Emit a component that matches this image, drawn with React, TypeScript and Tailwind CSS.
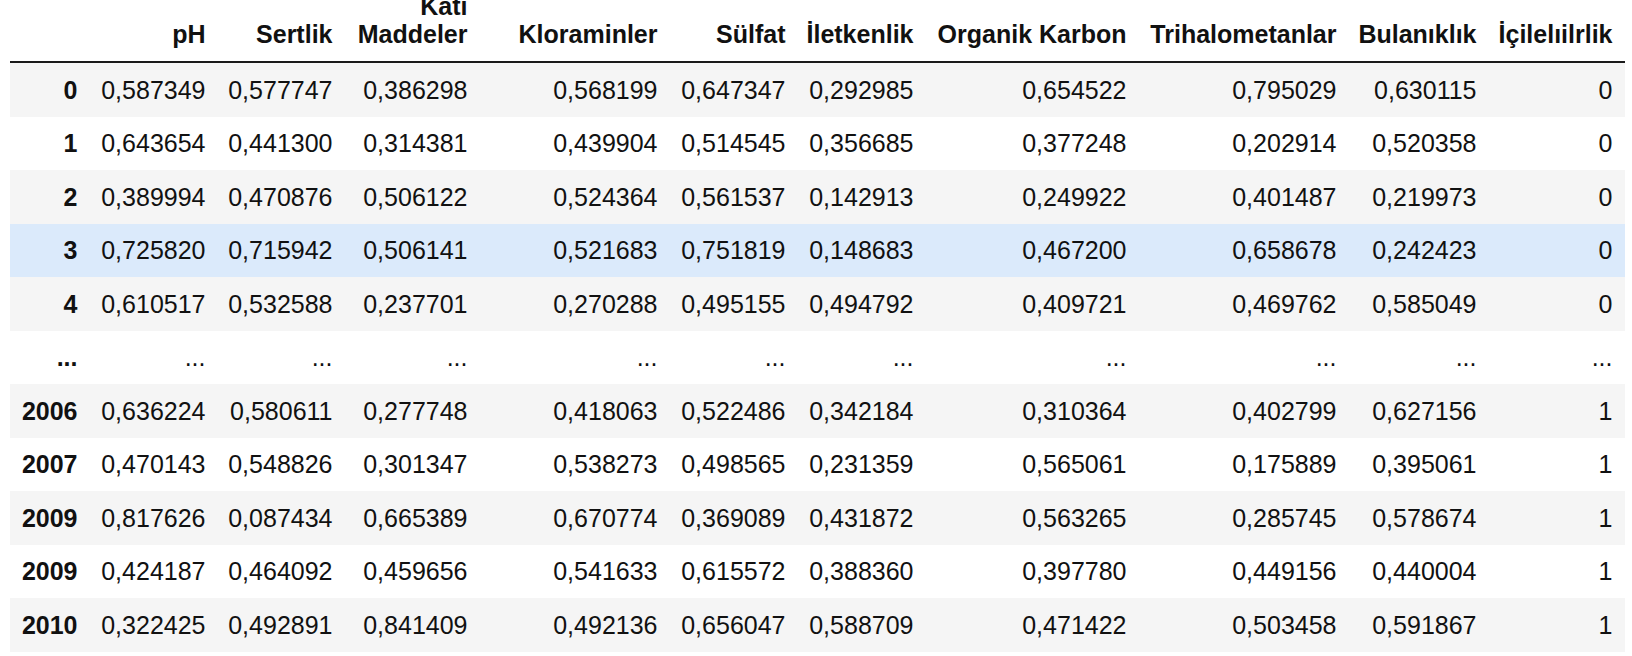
const columns = [
  { key: "ph", label: "pH", width: "w-[128px]" },
  { key: "sertlik", label: "Sertlik", width: "w-[127px]" },
  { key: "kati", label: "Katı Maddeler", width: "w-[135px]" },
  { key: "klor", label: "Kloraminler", width: "w-[190px]" },
  { key: "sulfat", label: "Sülfat", width: "w-[128px]" },
  { key: "iletken", label: "İletkenlik", width: "w-[128px]" },
  { key: "karbon", label: "Organik Karbon", width: "w-[213px]" },
  { key: "trihalo", label: "Trihalometanlar", width: "w-[210px]" },
  { key: "bulanik", label: "Bulanıklık", width: "w-[140px]" },
  { key: "icilebilir", label: "İçilelıilrlik", width: "w-[136px]" },
];

type Row = { index: string; values: string[]; hover?: boolean; ellipsis?: boolean };

const rows: Row[] = [
  { index: "0", values: ["0,587349", "0,577747", "0,386298", "0,568199", "0,647347", "0,292985", "0,654522", "0,795029", "0,630115", "0"] },
  { index: "1", values: ["0,643654", "0,441300", "0,314381", "0,439904", "0,514545", "0,356685", "0,377248", "0,202914", "0,520358", "0"] },
  { index: "2", values: ["0,389994", "0,470876", "0,506122", "0,524364", "0,561537", "0,142913", "0,249922", "0,401487", "0,219973", "0"] },
  { index: "3", values: ["0,725820", "0,715942", "0,506141", "0,521683", "0,751819", "0,148683", "0,467200", "0,658678", "0,242423", "0"], hover: true },
  { index: "4", values: ["0,610517", "0,532588", "0,237701", "0,270288", "0,495155", "0,494792", "0,409721", "0,469762", "0,585049", "0"] },
  { index: "...", values: Array(10).fill("..."), ellipsis: true },
  { index: "2006", values: ["0,636224", "0,580611", "0,277748", "0,418063", "0,522486", "0,342184", "0,310364", "0,402799", "0,627156", "1"] },
  { index: "2007", values: ["0,470143", "0,548826", "0,301347", "0,538273", "0,498565", "0,231359", "0,565061", "0,175889", "0,395061", "1"] },
  { index: "2009", values: ["0,817626", "0,087434", "0,665389", "0,670774", "0,369089", "0,431872", "0,563265", "0,285745", "0,578674", "1"] },
  { index: "2009", values: ["0,424187", "0,464092", "0,459656", "0,541633", "0,615572", "0,388360", "0,397780", "0,449156", "0,440004", "1"] },
  { index: "2010", values: ["0,322425", "0,492891", "0,841409", "0,492136", "0,656047", "0,588709", "0,471422", "0,503458", "0,591867", "1"] },
];

const cell = "pr-[12.5px] pl-0 py-[12.5px] text-right whitespace-nowrap";

export default function App() {
  return (
    <div className="h-[656px] w-[1632px] overflow-hidden bg-white font-['Liberation_Sans',Arial,sans-serif] text-[25px] leading-[28.5px] text-[#111]">
      <table className="ml-[10px] -mt-[21px] w-[1615px] table-fixed border-collapse">
        <colgroup>
          <col className="w-[80px]" />
          {columns.map((c) => (
            <col key={c.key} className={c.width} />
          ))}
        </colgroup>
        <thead className="border-b-2 border-[#1a1a1a] align-bottom">
          <tr>
            <th className={cell}></th>
            {columns.map((c) => (
              <th key={c.key} className={`${cell} font-bold`}>
                {c.key === "kati" ? (
                  <>
                    Katı
                    <br />
                    Maddeler
                  </>
                ) : (
                  c.label
                )}
              </th>
            ))}
          </tr>
        </thead>
        <tbody>
          {rows.map((r, i) => (
            <tr
              key={i}
              className={r.hover ? "bg-[#dbeafb]" : i % 2 === 0 ? "bg-[#f5f5f5]" : "bg-white"}
            >
              <th className={`${cell} font-bold`}>{r.index}</th>
              {r.values.map((v, j) => (
                <td key={j} className={cell}>
                  {v}
                </td>
              ))}
            </tr>
          ))}
        </tbody>
      </table>
    </div>
  );
}
